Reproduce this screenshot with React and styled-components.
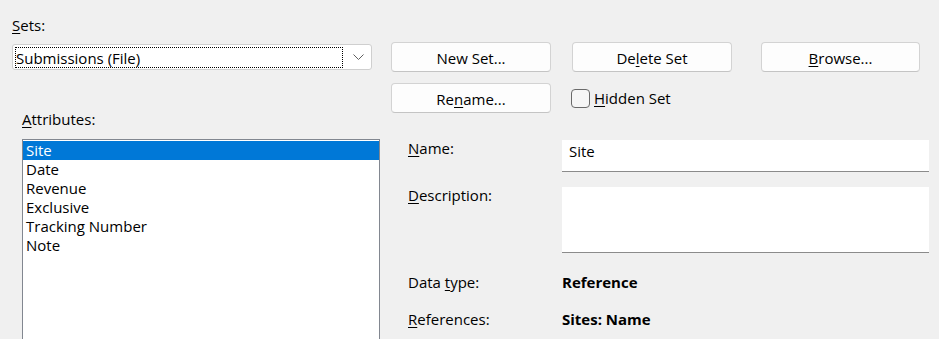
import React from "react";
import styled, { createGlobalStyle } from "styled-components";

const GlobalStyle = createGlobalStyle`
  html, body {
    margin: 0;
    padding: 0;
    background: #f0f0f0;
    overflow: hidden;
  }
  body {
    font-family: "Open Sans", "Noto Sans", sans-serif;
    font-size: 15px;
    line-height: 19px;
    color: #000;
  }
`;

const Page = styled.div`
  box-sizing: border-box;
  width: 939px;
  height: 339px;
  overflow: hidden;
  padding: 16px 0 0 12px;
`;

const Label = styled.div`
  line-height: ${(p) => p.$lh || 19}px;
  margin-top: ${(p) => p.$offset || 0}px;
  font-weight: ${(p) => (p.$bold ? 700 : 400)};
  white-space: nowrap;
`;

const Key = styled.span`
  text-decoration: underline;
  text-decoration-thickness: 1px;
  text-underline-offset: 2px;
`;

const TopGrid = styled.div`
  margin-top: 7px;
  display: grid;
  grid-template-columns: 379px 181px 189px 159px;
  grid-template-rows: 30px 30px;
  row-gap: 11px;
  align-items: center;
`;

const ComboBox = styled.div`
  box-sizing: border-box;
  width: 360px;
  height: 26px;
  display: flex;
  align-items: center;
  padding: 0 2px;
  background: #fff;
  border: 1px solid #cfcfcf;
  border-radius: 3px;
`;

const ComboValue = styled.div`
  box-sizing: border-box;
  flex: 0 0 328px;
  height: 21px;
  border: 1px dotted #000;
  line-height: 21px;
  white-space: nowrap;
`;

const Chevron = styled.svg`
  margin-left: 10px;
  flex: none;
`;

const Button = styled.button`
  box-sizing: border-box;
  display: block;
  width: ${(p) => p.$w || 160}px;
  height: 30px;
  padding: 6px 0 3px;
  background: #fdfdfd;
  border: 1px solid #d3d3d3;
  border-bottom-color: #c4c4c4;
  border-radius: 4px;
  font: inherit;
  line-height: 19px;
  color: #000;
  text-align: center;
`;

const CheckRow = styled.label`
  display: flex;
  align-items: center;
  gap: 4px;
  margin-left: -1px;
`;

const CheckBox = styled.span`
  box-sizing: border-box;
  width: 19px;
  height: 19px;
  border: 1px solid #6a6a6a;
  border-radius: 4px;
  background: #f6f6f6;
`;

const Lower = styled.div`
  margin: -3px 0 0 10px;
  display: grid;
  grid-template-columns: 358px 521px;
  grid-template-rows: 29px auto;
  column-gap: 28px;
  align-items: start;
`;

const ListBox = styled.div`
  grid-column: 1;
  grid-row: 2;
  box-sizing: border-box;
  height: 210px;
  padding-top: 1px;
  background: #fff;
  border: 1px solid #828790;
`;

const ListItem = styled.div`
  height: 19px;
  line-height: 19px;
  padding-left: 3px;
  background: ${(p) => (p.$selected ? "#0078d7" : "transparent")};
  color: ${(p) => (p.$selected ? "#fff" : "#000")};
  white-space: nowrap;
`;

const Form = styled.div`
  grid-column: 2;
  grid-row: 2;
  align-self: start;
  margin-top: 1px;
  display: grid;
  grid-template-columns: 154px 367px;
  align-content: start;
  row-gap: 15px;
  align-items: start;
`;

const TextBox = styled.div`
  box-sizing: border-box;
  height: ${(p) => p.$h}px;
  padding: 2px 7px 0;
  line-height: 19px;
  background: #fff;
  border-bottom: 1px solid #8b8b8b;
`;

const attributes = ["Site", "Date", "Revenue", "Exclusive", "Tracking Number", "Note"];

export default function App() {
  return (
    <>
      <GlobalStyle />
      <Page>
        <Label>
          <Key>S</Key>ets:
        </Label>
        <TopGrid>
          <ComboBox>
            <ComboValue>Submissions (File)</ComboValue>
            <Chevron width="11" height="6" viewBox="0 0 11 6">
              <polyline points="0.5,0.5 5.5,5.5 10.5,0.5" fill="none" stroke="#5f5f5f" strokeWidth="1" />
            </Chevron>
          </ComboBox>
          <Button>New Set...</Button>
          <Button>
            De<Key>l</Key>ete Set
          </Button>
          <Button $w={159}>
            <Key>B</Key>rowse...
          </Button>
          <span />
          <Button>
            Re<Key>n</Key>ame...
          </Button>
          <CheckRow>
            <CheckBox />
            <span>
              <Key>H</Key>idden Set
            </span>
          </CheckRow>
        </TopGrid>
        <Lower>
          <Label>
            <Key>A</Key>ttributes:
          </Label>
          <ListBox>
            {attributes.map((a, i) => (
              <ListItem key={a} $selected={i === 0}>
                {a}
              </ListItem>
            ))}
          </ListBox>
          <Form>
            <Label $lh={16}>
              <Key>N</Key>ame:
            </Label>
            <TextBox $h={32}>Site</TextBox>
            <Label $lh={16}>
              <Key>D</Key>escription:
            </Label>
            <TextBox $h={66} />
            <Label $offset={5}>
              Data <Key>t</Key>ype:
            </Label>
            <Label $offset={5} $bold>
              Reference
            </Label>
            <Label $offset={3}>
              <Key>R</Key>eferences:
            </Label>
            <Label $offset={3} $bold>
              Sites: Name
            </Label>
          </Form>
        </Lower>
      </Page>
    </>
  );
}
